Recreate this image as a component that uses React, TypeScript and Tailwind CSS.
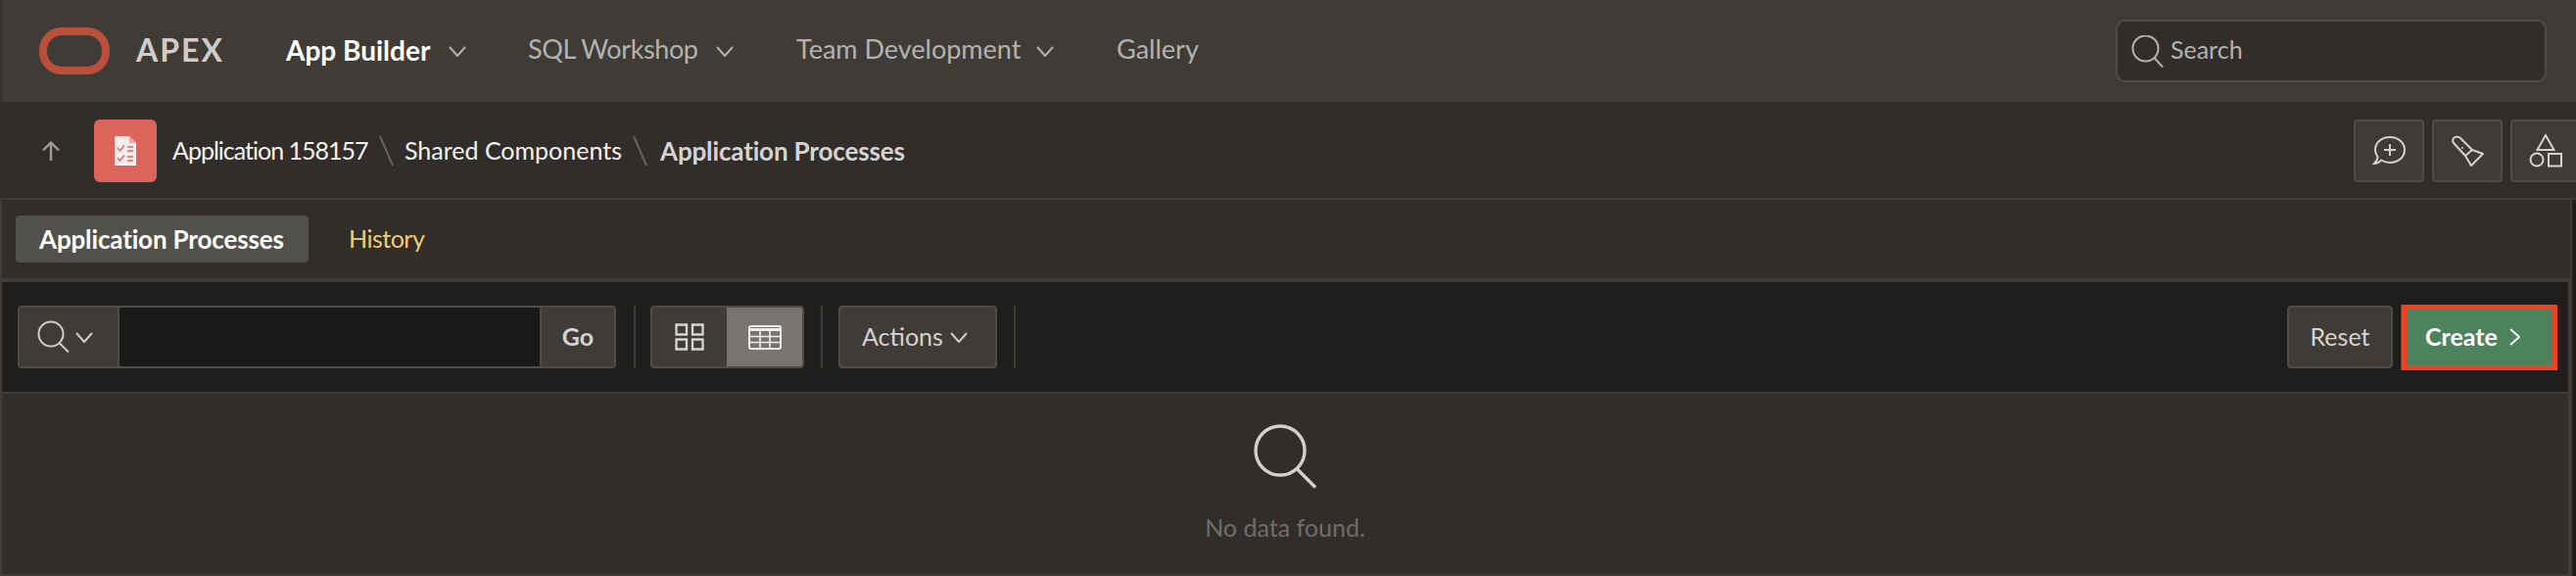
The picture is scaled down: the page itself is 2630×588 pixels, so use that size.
import React from "react";

const F = "font-['Lato','Noto_Sans',sans-serif]";

function Chevron({ className = "", color = "#b4b2ae" }: { className?: string; color?: string }) {
  return (
    <svg width="18" height="11" viewBox="0 0 18 11" className={className} fill="none">
      <path d="M1 1l8 9 8-9" stroke={color} strokeWidth="2" />
    </svg>
  );
}

function Bar({ children, w, className = "" }: { children: React.ReactNode; w: number; className?: string }) {
  return (
    <span className={`block whitespace-nowrap ${className}`} style={{ width: w }}>
      {children}
    </span>
  );
}

function ToolBtn({ children, className = "" }: { children: React.ReactNode; className?: string }) {
  return (
    <div className={`w-[72px] h-[64px] shrink-0 bg-[#3f3c37] border-2 border-[#4e4c47] rounded-[4px] box-border ${className}`}>
      {children}
    </div>
  );
}

function Slash() {
  return (
    <svg width="15" height="32" viewBox="0 0 15 32" fill="none" className="shrink-0">
      <path d="M1 1l13 30" stroke="#66635e" strokeWidth="2" />
    </svg>
  );
}

export default function App() {
  return (
    <div className={`w-[2630px] h-[588px] overflow-hidden bg-[#1e1d1b] flex flex-col ${F}`}>
      {/* Top header */}
      <header className="h-[104px] shrink-0 bg-[#3f3c37] flex items-center pl-[40px] pr-[30px] border-l-2 border-[#353230] box-border">
        <svg width="72" height="48" viewBox="0 0 72 48" fill="none" className="shrink-0 -ml-[2px]">
          <rect x="4" y="4" width="64" height="40" rx="19" stroke="#bb4f3c" strokeWidth="8" />
        </svg>
        <Bar w={90} className="ml-[27px] -mt-[3px] text-[32px] font-bold tracking-[2px] text-[#cfcdc9]">APEX</Bar>
        <Bar w={146} className="ml-[63px] -mt-[3px] text-[28px] font-bold text-white">App Builder</Bar>
        <Chevron className="ml-[20px]" />
        <Bar w={173} className="ml-[63px] -mt-[3px] text-[27px] tracking-[-0.4px] text-[#b4b2ae]">SQL Workshop</Bar>
        <Chevron className="ml-[19px]" />
        <Bar w={229} className="ml-[64px] -mt-[3px] text-[27px] text-[#b4b2ae]">Team Development</Bar>
        <Chevron className="ml-[16px]" />
        <Bar w={82} className="ml-[64px] -mt-[3px] text-[27px] text-[#b4b2ae]">Gallery</Bar>
        <div className="ml-auto w-[440px] h-[64px] bg-[#312d2a] border-2 border-[#4e4c47] rounded-[10px] box-border flex items-center pl-[14px]">
          <svg width="33" height="33" viewBox="0 0 33 33" fill="none" className="shrink-0">
            <circle cx="14.5" cy="13.5" r="13" stroke="#b4b2ae" strokeWidth="2" />
            <path d="M23.5 23l8.5 9.5" stroke="#b4b2ae" strokeWidth="2" />
          </svg>
          <span className="ml-[7px] -mt-[2px] text-[25px] text-[#b4b2ae]">Search</span>
        </div>
      </header>

      {/* Breadcrumb bar */}
      <div className="h-[100px] shrink-0 bg-[#312d2a] border-b-2 border-[#3f3c37] box-border flex items-center pl-[43px] pt-[2px]">
        <svg width="18" height="20" viewBox="0 0 18 20" fill="none" className="shrink-0">
          <path d="M9 20V2M1 9.5L9 1.5l8 8" stroke="#9d9b97" strokeWidth="2.4" />
        </svg>
        <div className="ml-[35px] w-[64px] h-[64px] shrink-0 rounded-[6px] bg-[#dd645a] flex items-center justify-center">
          <svg width="24" height="32" viewBox="0 0 24 32" fill="none">
            <path d="M1 1h15l7 7v23H1z" fill="#f8ecea" />
            <path d="M16 1l7 7h-7z" fill="#eda69f" />
            <path d="M4 13l2.5 3L11 10.5M4 23l2.5 3 4.5-5.5" stroke="#d9645a" strokeWidth="1.3" />
            <path d="M14 12h6M14 16h6M14 22h6M14 26h6" stroke="#d9645a" strokeWidth="1.3" />
          </svg>
        </div>
        <Bar w={199} className="ml-[16px] text-[25px] tracking-[-1px] text-[#f4f3f1]">Application 158157</Bar>
        <div className="ml-[12px] shrink-0"><Slash /></div>
        <Bar w={222} className="ml-[11px] text-[25px] text-[#f4f3f1]">Shared Components</Bar>
        <div className="ml-[11px] shrink-0"><Slash /></div>
        <Bar w={251} className="ml-[13px] text-[26px] font-bold tracking-[-0.15px] text-[#d6d4d0]">Application Processes</Bar>
        <div className="ml-auto flex gap-[8px] -mr-[5px]">
          <ToolBtn>
            <svg width="68" height="60" viewBox="2 2 68 60" fill="none">
              <path d="M37 18C45.5 18 52 23.5 52 31C52 38.5 45.5 44 37 44C33.5 44 30.5 43 28 41.5C26 44 24 45 21 45C23 43 24.5 40.5 24.5 38C23 36 22 33.5 22 31C22 23.5 28.5 18 37 18Z" stroke="#d4d2ce" strokeWidth="2" />
              <path d="M37 25v12M31 31h12" stroke="#d4d2ce" strokeWidth="2" />
            </svg>
          </ToolBtn>
          <ToolBtn>
            <svg width="68" height="60" viewBox="2 2 68 60" fill="none">
              <path d="M22 24C20 21 22 18 25 17.5C26.5 17.5 28 18 29 19L41 31L52 35L40 47L34 37Z" stroke="#d4d2ce" strokeWidth="2" strokeLinejoin="round" />
              <path d="M41 31l-7 6" stroke="#d4d2ce" strokeWidth="2" />
              <circle cx="31" cy="29" r="1" fill="#d4d2ce" />
            </svg>
          </ToolBtn>
          <ToolBtn>
            <svg width="68" height="60" viewBox="2 2 68 60" fill="none">
              <path d="M36 16l8.5 15h-17z" stroke="#d4d2ce" strokeWidth="2" />
              <circle cx="27" cy="41" r="6.5" stroke="#d4d2ce" strokeWidth="2" />
              <rect x="39" y="35" width="13" height="12.5" stroke="#d4d2ce" strokeWidth="2" />
            </svg>
          </ToolBtn>
        </div>
      </div>

      {/* Main region */}
      <div className="flex-1 mr-[4px] flex flex-col border-l-2 border-[#3f3c37] box-border bg-[#312d2a]">
        <div className="h-[80px] shrink-0 border-r-2 border-[#3f3c37] box-border flex items-center pl-[14px]">
          <div className="w-[299px] h-[48px] rounded-[4px] bg-[#52504c] flex items-center pl-[24px]">
            <span className="text-[26px] font-bold tracking-[-0.15px] text-white whitespace-nowrap">Application Processes</span>
          </div>
          <span className="ml-[41px] text-[25px] tracking-[-0.5px] text-[#f0cc71] whitespace-nowrap">History</span>
        </div>

        <div className="flex-1 flex flex-col border-t-4 border-r-4 border-b-2 border-[#3f3c37] box-border">
          <div className="h-[112px] shrink-0 bg-[#1f1e1c] flex items-center pl-[16px]">
            {/* Search group */}
            <div className="flex h-[64px] w-[611px] shrink-0 border-2 border-[#4e4c47] rounded-[4px] box-border overflow-hidden">
              <div className="w-[102px] shrink-0 bg-[#3f3c37] border-r-2 border-[#4e4c47] flex items-center pl-[18px]">
                <svg width="34" height="34" viewBox="0 0 34 34" fill="none" className="shrink-0">
                  <circle cx="14" cy="14" r="12.5" stroke="#d0cec9" strokeWidth="2" />
                  <path d="M22.5 23l9.5 9.5" stroke="#d0cec9" strokeWidth="2" />
                </svg>
                <Chevron className="ml-[5px]" color="#d0cec9" />
              </div>
              <div className="flex-1 bg-[#191917]" />
              <div className="w-[76px] shrink-0 bg-[#3f3c37] border-l-2 border-[#4e4c47] flex items-center justify-center">
                <span className="text-[25px] font-bold text-[#d5d3cf]">Go</span>
              </div>
            </div>
            <div className="ml-[18px] w-[2px] h-[64px] bg-[#3f3c37] shrink-0" />
            {/* View switch */}
            <div className="ml-[15px] flex h-[64px] w-[157px] shrink-0 border-2 border-[#4e4c47] rounded-[4px] box-border overflow-hidden">
              <div className="w-[76px] bg-[#3f3c37] flex items-center justify-center">
                <svg width="30" height="28" viewBox="0 0 30 28" fill="none">
                  <path d="M1.5 1.5h10.5v10H1.5zM18 1.5h10.5v10H18zM1.5 16.5h10.5v10H1.5zM18 16.5h10.5v10H18z" stroke="#d5d3cf" strokeWidth="2.4" />
                </svg>
              </div>
              <div className="flex-1 bg-[#787570] flex items-center justify-center">
                <svg width="34" height="25" viewBox="0 0 34 25" fill="none">
                  <rect x="1" y="1" width="32" height="23" rx="2" stroke="#f0efed" strokeWidth="2" />
                  <path d="M1 3h32v3H1z" fill="#f0efed" />
                  <path d="M1 11.5h32M1 17.5h32M12 6v18M22 6v18" stroke="#f0efed" strokeWidth="1.6" />
                </svg>
              </div>
            </div>
            <div className="ml-[17px] w-[2px] h-[64px] bg-[#3f3c37] shrink-0" />
            {/* Actions */}
            <div className="ml-[16px] h-[64px] w-[162px] shrink-0 bg-[#3f3c37] border-2 border-[#4e4c47] rounded-[4px] box-border flex items-center pl-[22px]">
              <Bar w={81} className="text-[25px] text-[#d5d3cf]">Actions</Bar>
              <Chevron className="ml-[9px]" color="#d0cec9" />
            </div>
            <div className="ml-[17px] w-[2px] h-[64px] bg-[#3f3c37] shrink-0" />

            {/* Right buttons */}
            <div className="ml-auto h-[64px] w-[108px] shrink-0 bg-[#3f3c37] border-2 border-[#4e4c47] rounded-[4px] box-border flex items-center justify-center">
              <span className="text-[25px] text-[#d5d3cf]">Reset</span>
            </div>
            <div className="ml-[9px] mr-[11px] h-[67px] w-[159px] shrink-0 bg-[#4c825c] border-[5px] border-[#ed4224] box-border shadow-[-1px_0_0_#4e4c47] flex items-center pl-[19px]">
              <Bar w={73} className="text-[25px] font-bold text-white">Create</Bar>
              <svg width="11" height="18" viewBox="0 0 11 18" fill="none" className="ml-[13px] shrink-0">
                <path d="M1 1l9 8-9 8" stroke="#f4f3f1" strokeWidth="2" />
              </svg>
            </div>
          </div>

          {/* Empty state */}
          <div className="flex-1 border-t-2 border-[#3f3c37] box-border flex flex-col items-center">
            <svg width="64" height="66" viewBox="0 0 64 66" fill="none" className="mt-[31px] shrink-0">
              <circle cx="27" cy="27" r="25" stroke="#d2d0cc" strokeWidth="3.4" />
              <path d="M44.5 46L62 63.5" stroke="#d2d0cc" strokeWidth="3.4" strokeLinecap="round" />
            </svg>
            <span className="mt-[22px] text-[25px] leading-[34px] text-[#6f6d6a] whitespace-nowrap">No data found.</span>
          </div>
        </div>
      </div>
    </div>
  );
}
